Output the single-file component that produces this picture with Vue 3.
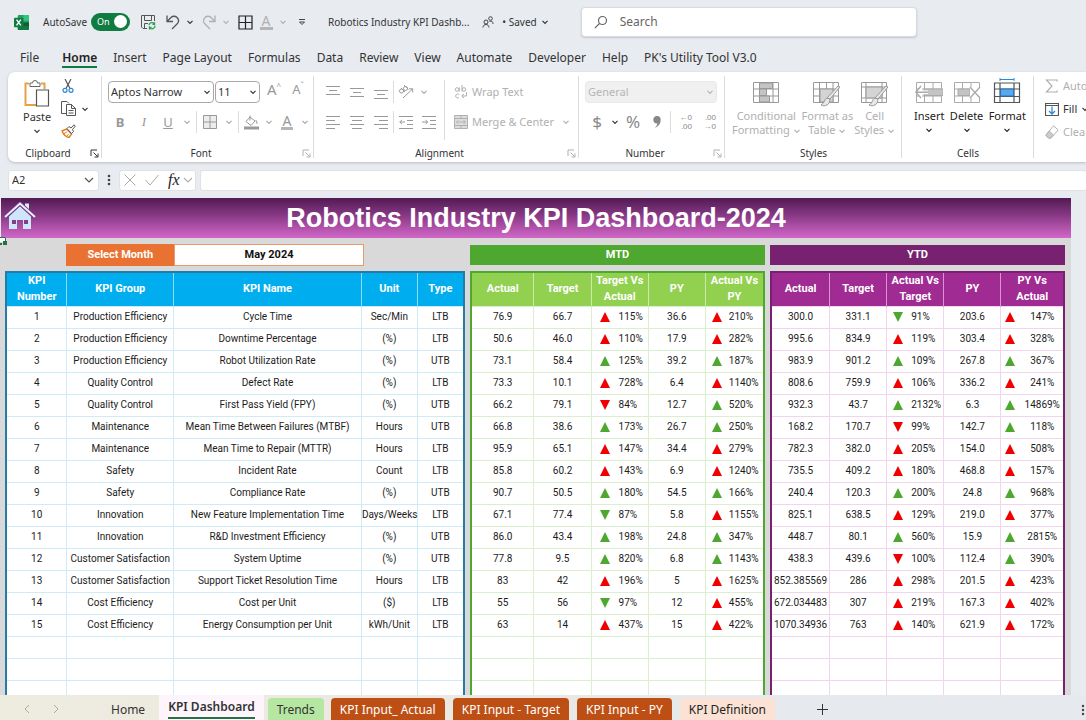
<script setup>
import { ref, h } from 'vue'

const menu = ['File', 'Home', 'Insert', 'Page Layout', 'Formulas', 'Data', 'Review', 'View', 'Automate', 'Developer', 'Help', "PK's Utility Tool V3.0"]
const fontName = ref('Aptos Narrow')
const fontSize = ref('11')
const numberFormat = ref('General')
const cellName = ref('A2')
const formula = ref('')
const search = ref('')
const autosave = ref(true)

const Chev = () => h('svg', { class: 'chev', viewBox: '0 0 8 8', width: 8, height: 8, 'aria-hidden': 'true' },
  [h('path', { d: 'M1.5 2.8 4 5.3 6.5 2.8', fill: 'none', stroke: 'currentColor', 'stroke-width': 1.2 })])
const Launch = () => h('svg', { class: 'launch', viewBox: '0 0 9 9', width: 9, height: 9, 'aria-hidden': 'true' },
  [h('path', { d: 'M1 7V1h6M3.5 3.5 7.5 7.5M8 4.5V8H4.5', fill: 'none', stroke: 'currentColor' })])
const LineIcon = (p) => h('svg', { viewBox: '0 0 14 14', width: 14, height: 14, 'aria-hidden': 'true' },
  [h('path', { d: p.d, fill: 'none', stroke: 'currentColor', 'stroke-width': 1 })])
LineIcon.props = ['d']
const Tri = (p) => h('svg', { class: 'tri', viewBox: '0 0 10 10', width: 10, height: 10, 'aria-hidden': 'true' },
  [h('path', { d: p.k[1] === 'u' ? 'M5 0 10 10H0z' : 'M0 0H10L5 10z', fill: p.k[0] === 'r' ? '#f20000' : '#4ea72e' })])
Tri.props = ['k']

const vAlign = [
  { label: 'Top Align', d: 'M0 1.5H14M3 5.500H11M0 9.500H14' },
  { label: 'Middle Align', d: 'M0 3.500H14M3 7.500H11M0 11.500H14' },
  { label: 'Bottom Align', d: 'M0 5.500H14M3 9.500H11M0 13.500H14' }
]
const hAlign = [
  { label: 'Align Left', d: 'M0 1.500H14M0 5.500H9M0 9.500H14M0 13.500H9' },
  { label: 'Center', d: 'M0 1.500H14M2 5.500H12M0 9.500H14M2 13.500H12' },
  { label: 'Align Right', d: 'M0 1.500H14M5 5.500H14M0 9.500H14M5 13.500H14' }
]

const kpis = [
  ['Production Efficiency', 'Cycle Time', 'Sec/Min', 'LTB'],
  ['Production Efficiency', 'Downtime Percentage', '(%)', 'LTB'],
  ['Production Efficiency', 'Robot Utilization Rate', '(%)', 'UTB'],
  ['Quality Control', 'Defect Rate', '(%)', 'LTB'],
  ['Quality Control', 'First Pass Yield (FPY)', '(%)', 'UTB'],
  ['Maintenance', 'Mean Time Between Failures (MTBF)', 'Hours', 'UTB'],
  ['Maintenance', 'Mean Time to Repair (MTTR)', 'Hours', 'LTB'],
  ['Safety', 'Incident Rate', 'Count', 'LTB'],
  ['Safety', 'Compliance Rate', '(%)', 'UTB'],
  ['Innovation', 'New Feature Implementation Time', 'Days/Weeks', 'LTB'],
  ['Innovation', 'R&D Investment Efficiency', '(%)', 'UTB'],
  ['Customer Satisfaction', 'System Uptime', '(%)', 'UTB'],
  ['Customer Satisfaction', 'Support Ticket Resolution Time', 'Hours', 'LTB'],
  ['Cost Efficiency', 'Cost per Unit', '($)', 'LTB'],
  ['Cost Efficiency', 'Energy Consumption per Unit', 'kWh/Unit', 'LTB']
]

// Each row: actual, target, trend + percentage, previous year, trend + percentage.
const periods = [
  {
    name: 'MTD',
    cls: 'mtd',
    heads: ['Actual', 'Target', 'Target Vs Actual', 'PY', 'Actual Vs PY'],
    rows: [
      ['76.9', '66.7', 'ru', '115%', '36.6', 'ru', '210%'],
      ['50.6', '46.0', 'ru', '110%', '17.9', 'ru', '282%'],
      ['73.1', '58.4', 'gu', '125%', '39.2', 'gu', '187%'],
      ['73.3', '10.1', 'ru', '728%', '6.4', 'ru', '1140%'],
      ['66.2', '79.1', 'rd', '84%', '12.7', 'gu', '520%'],
      ['66.8', '38.6', 'gu', '173%', '26.7', 'gu', '250%'],
      ['95.9', '65.1', 'ru', '147%', '34.4', 'ru', '279%'],
      ['85.8', '60.2', 'ru', '143%', '6.9', 'ru', '1240%'],
      ['90.7', '50.5', 'gu', '180%', '54.5', 'gu', '166%'],
      ['67.1', '77.4', 'gd', '87%', '5.8', 'ru', '1155%'],
      ['86.0', '43.4', 'gu', '198%', '24.8', 'gu', '347%'],
      ['77.8', '9.5', 'gu', '820%', '6.8', 'gu', '1143%'],
      ['83', '42', 'ru', '196%', '5', 'ru', '1625%'],
      ['55', '56', 'gd', '97%', '12', 'ru', '455%'],
      ['63', '14', 'ru', '437%', '15', 'ru', '422%']
    ]
  },
  {
    name: 'YTD',
    cls: 'ytd',
    heads: ['Actual', 'Target', 'Actual Vs Target', 'PY', 'PY Vs Actual'],
    rows: [
      ['300.0', '331.1', 'gd', '91%', '203.6', 'ru', '147%'],
      ['995.6', '834.9', 'ru', '119%', '303.4', 'ru', '328%'],
      ['983.9', '901.2', 'gu', '109%', '267.8', 'gu', '367%'],
      ['808.6', '759.9', 'ru', '106%', '336.2', 'ru', '241%'],
      ['932.3', '43.7', 'gu', '2132%', '6.3', 'gu', '14869%'],
      ['168.2', '170.7', 'rd', '99%', '142.7', 'gu', '118%'],
      ['782.3', '382.0', 'ru', '205%', '154.0', 'ru', '508%'],
      ['735.5', '409.2', 'ru', '180%', '468.8', 'ru', '157%'],
      ['240.4', '120.3', 'gu', '200%', '24.8', 'gu', '968%'],
      ['825.1', '638.5', 'ru', '129%', '219.0', 'ru', '377%'],
      ['448.7', '80.1', 'gu', '560%', '15.9', 'gu', '2815%'],
      ['438.3', '439.6', 'rd', '100%', '112.4', 'gu', '390%'],
      ['852.385569', '286', 'ru', '298%', '201.5', 'ru', '423%'],
      ['672.034483', '307', 'ru', '219%', '167.3', 'ru', '402%'],
      ['1070.34936', '763', 'ru', '140%', '621.9', 'ru', '172%']
    ]
  }
]
</script>

<template>
  <div class="app">
    <header class="title-bar">
      <svg class="logo" viewBox="0 0 16 16" width="15" height="15" aria-label="Excel">
        <rect x="4" y="0" width="12" height="16" rx="1" fill="#21a366" />
        <path d="M4 8h12v7a1 1 0 0 1-1 1H5a1 1 0 0 1-1-1z" fill="#107c41" />
        <path d="M10 0h5a1 1 0 0 1 1 1v5h-6z" fill="#33c481" />
        <path d="M10 8h6v4h-6z" fill="#185c37" />
        <rect y="3" width="10" height="10" rx="1" fill="#107c41" />
        <path d="M2.700 5 7.300 11M7.300 5 2.700 11" stroke="#fff" stroke-width="1.500" />
      </svg>
      <label class="autosave">AutoSave
        <span class="toggle"><input v-model="autosave" type="checkbox" role="switch"><span>On</span></span>
      </label>
      <button class="ic save" aria-label="Save">
        <svg viewBox="0 0 16 16" width="16" height="16" fill="none" stroke="#555">
          <path d="M7 14.500H3L1.500 13V1.500h13V7M4.500 1.500v5h7v-5M4.500 14V9.500H8" />
          <path d="M9 11a3 3 0 0 1 5.500-1V8.200M14.500 10.300h-2M15 12a3 3 0 0 1-5.500 1.500v2M9.500 13.300h2" stroke="#2c9c4d" stroke-width="1.300" />
        </svg>
      </button>
      <button class="ic" aria-label="Undo">
        <svg viewBox="0 0 14 16" width="14" height="16" fill="none" stroke="#555" stroke-width="1.300"><path d="M1 1.500v6h6M1.500 7 5 3.500a4.200 4.200 0 0 1 6 0c2 2 2 4.500 0 6.500L6 15" /></svg>
      </button>
      <button class="ic drop" aria-label="Undo options"><Chev /></button>
      <button class="ic off" aria-label="Redo">
        <svg viewBox="0 0 14 16" width="14" height="16" fill="none" stroke="currentColor" stroke-width="1.300"><path d="M13 1.500v6H7M12.500 7 9 3.500a4.200 4.200 0 0 0-6 0c-2 2-2 4.500 0 6.500l5 5" /></svg>
      </button>
      <button class="ic drop off" aria-label="Redo options"><Chev /></button>
      <button class="ic" aria-label="Borders">
        <svg viewBox="0 0 15 15" width="15" height="15" fill="none" stroke="#222" stroke-width="1.200"><path d="M1 1h13v13H1zM7.500 1v13M1 7.500h13" /></svg>
      </button>
      <button class="ic off font-color" aria-label="Font Color"><span>A</span></button>
      <button class="ic drop off" aria-label="Font color options"><Chev /></button>
      <button class="ic customize" aria-label="Customize Quick Access Toolbar">
        <svg viewBox="0 0 8 8" width="8" height="8" fill="none" stroke="#444"><path d="M1 1.500h6M1.500 4h5L4 6.500z" /></svg>
      </button>
      <span class="doc">Robotics Industry KPI Dashb...</span>
      <svg class="people" viewBox="0 0 12 12" width="12" height="12" fill="none" stroke="#444">
        <circle cx="4" cy="6" r="2" /><path d="M1 11.500c0-4 6-4 6 0" /><circle cx="8.500" cy="2.500" r="1.800" /><path d="M7.500 5.500c2-1 3.500 0 3.500 2.500" />
      </svg>
      <button class="saved">• Saved <Chev /></button>
      <label class="search">
        <svg viewBox="0 0 14 14" width="14" height="14" fill="none" stroke="#666" stroke-width="1.200"><circle cx="8.500" cy="5.500" r="4" /><path d="M5.500 8.500.8 13.200" /></svg>
        <input v-model="search" type="text" placeholder="Search" aria-label="Search">
      </label>
    </header>

    <nav class="menu" aria-label="Ribbon tabs">
      <a v-for="m in menu" :key="m" href="#" :class="{ active: m === 'Home' }">{{ m }}</a>
    </nav>

    <div class="ribbon">
      <section class="group clipboard">
        <div class="body">
          <button class="big">
            <svg viewBox="0 0 26 28" width="26" height="28" fill="none">
              <path d="M5 4.500H1.500V26h11" stroke="#e8a046" stroke-width="2" /><path d="M17 4.500h3.500V10" stroke="#e8a046" stroke-width="2" />
              <path d="M6 7.500V4h2.500a2.500 2.500 0 0 1 5 0H16v3.500z" fill="#fff" stroke="#666" />
              <path d="M12.500 11h12v16h-12z" fill="#fff" stroke="#555" stroke-width="1.200" />
            </svg>
            Paste<Chev />
          </button>
          <div class="small">
            <button aria-label="Cut">
              <svg viewBox="0 0 12 14" width="12" height="14" fill="none"><path d="M3 0l5 9.500M9 0 4 9.500" stroke="#555" stroke-width="1.200" /><circle cx="3" cy="11.300" r="2" stroke="#2b88d8" stroke-width="1.200" /><circle cx="9" cy="11.300" r="2" stroke="#2b88d8" stroke-width="1.200" /></svg>
            </button>
            <span class="pair">
              <button aria-label="Copy">
                <svg viewBox="0 0 15 15" width="15" height="15" fill="none" stroke="#555"><path d="M5 12.500H.5V.5H6l2 2" /><path d="M5.500 3.500h5l4 4v7h-9zM10.500 3.500v4h4M7.500 9.500h5M7.500 12h5" /></svg>
              </button>
              <button aria-label="Copy options"><Chev /></button>
            </span>
            <button aria-label="Format Painter">
              <svg viewBox="0 0 15 14" width="15" height="14" fill="none"><path d="M1 7 5.500 5l5 5L8 13.500C5 13 2.500 10.500 1 7z" fill="#fff" stroke="#e07b1c" stroke-width="1.400" /><path d="M3 9.500 6 8M6 12l1.500-2" stroke="#e07b1c" /><path d="M6 4.500 8 2.500 10 4 13 .8l1.300 1.300L11.500 5.500 12.500 7.500 10.500 9.500z" fill="#fff" stroke="#555" /></svg>
            </button>
          </div>
        </div>
        <footer>Clipboard<Launch /></footer>
      </section>

      <section class="group font off-launch">
        <div class="body rows">
          <div class="row">
            <span class="select name"><select v-model="fontName" aria-label="Font"><option>Aptos Narrow</option></select><Chev /></span>
            <span class="select size"><select v-model="fontSize" aria-label="Font size"><option>11</option></select><Chev /></span>
            <button class="tool grow" aria-label="Increase Font Size">A<sup>^</sup></button>
            <button class="tool shrink" aria-label="Decrease Font Size">A<sup>ˇ</sup></button>
          </div>
          <div class="row">
            <button class="tool" aria-label="Bold"><b>B</b></button>
            <button class="tool" aria-label="Italic"><i>I</i></button>
            <button class="tool" aria-label="Underline"><u>U</u></button>
            <button class="mini" aria-label="Underline options"><Chev /></button>
            <span class="sep"></span>
            <button class="tool" aria-label="Borders">
              <svg viewBox="0 0 14 14" width="14" height="14" fill="#ededed" stroke="currentColor"><path d="M.5.5h13v13H.5zM7 .5v13M.5 7h13" /></svg>
            </button>
            <button class="mini" aria-label="Border options"><Chev /></button>
            <span class="sep"></span>
            <button class="tool fill" aria-label="Fill Color">
              <svg viewBox="0 0 15 15" width="15" height="15" fill="none" stroke="currentColor"><path d="M6 2l5 4-4 4.500-5-4zM6 .5v5M11.500 5c1.500 1 1.500 3 1.500 4" /><path d="M0 13h15" stroke-width="3" /></svg>
            </button>
            <button class="mini" aria-label="Fill options"><Chev /></button>
            <button class="tool fill font-color" aria-label="Font Color"><span>A</span></button>
            <button class="mini" aria-label="Font color options"><Chev /></button>
          </div>
        </div>
        <footer>Font<Launch /></footer>
      </section>

      <section class="group align off-launch">
        <div class="body">
          <div class="rows first">
            <div class="row">
              <button v-for="a in vAlign" :key="a.label" class="tool" :aria-label="a.label"><LineIcon :d="a.d" /></button>
              <span class="sep"></span>
              <button class="tool" aria-label="Orientation">
                <svg viewBox="0 0 16 14" width="16" height="14" fill="none" stroke="currentColor"><circle cx="3.500" cy="6" r="2" /><path d="M3 3l4 4M6 0l4.500 4.500" /><circle cx="7.500" cy="3.500" r="2" /><path d="M5 13 14.500 4M11 3.800h3.700v3.500" /></svg>
              </button>
              <button class="mini" aria-label="Orientation options"><Chev /></button>
            </div>
            <div class="row">
              <button v-for="a in hAlign" :key="a.label" class="tool" :aria-label="a.label"><LineIcon :d="a.d" /></button>
              <span class="sep"></span>
              <button class="tool" aria-label="Decrease Indent"><LineIcon d="M0 1.500H14M8 5.500H14M8 9.500H14M0 13.500H14M6 7H.8M3 4.800.8 7 3 9.200" /></button>
              <button class="tool" aria-label="Increase Indent"><LineIcon d="M0 1.500H14M8 5.500H14M8 9.500H14M0 13.500H14M0 7H5.500M3.500 4.800 5.700 7 3.500 9.200" /></button>
            </div>
          </div>
          <span class="tall-sep"></span>
          <div class="rows second">
            <button class="row text-tool">
              <svg viewBox="0 0 14 14" width="14" height="14" fill="none" stroke="currentColor"><circle cx="3" cy="4.500" r="1.800" /><path d="M5.300 2.500v4M8 0v6.500" /><circle cx="10" cy="4.500" r="1.800" /><path d="M5 9.500a2 2 0 1 0 0 3M12.500 7v4H8M10 9l-2.300 2L10 13" /></svg>
              Wrap Text
            </button>
            <button class="row text-tool">
              <svg viewBox="0 0 14 14" width="14" height="14" fill="#ddd" stroke="currentColor"><path d="M.5.5h13v13H.5zM.5 3.500h13M.5 10.500h13M7 .5v3M7 10.500v3M2.500 7h9M4.500 5 2.500 7l2 2M9.500 5l2 2-2 2" /></svg>
              Merge &amp; Center <Chev />
            </button>
          </div>
        </div>
        <footer>Alignment<Launch /></footer>
      </section>

      <section class="group number off-launch">
        <div class="body rows">
          <div class="row">
            <span class="select fmt"><select v-model="numberFormat" disabled aria-label="Number format"><option>General</option></select><Chev /></span>
          </div>
          <div class="row nums">
            <button aria-label="Accounting" class="glyph">$</button>
            <button class="dark" aria-label="Accounting options"><Chev /></button>
            <button aria-label="Percent" class="glyph">%</button>
            <button aria-label="Comma" class="glyph">
              <svg viewBox="0 0 8 12" width="8" height="12"><path d="M4 0a3.500 3.500 0 0 1 3.700 3.800C7.700 8 5 11 1.500 12c1.800-1.500 2.800-3 2.900-4.500C2 7.800.3 6 .3 3.800A3.600 3.600 0 0 1 4 0z" fill="currentColor" /></svg>
            </button>
            <span class="sep"></span>
            <button class="dec" aria-label="Increase Decimal"><span>←0</span><span>.00</span></button>
            <button class="dec" aria-label="Decrease Decimal"><span>.00</span><span>→0</span></button>
          </div>
        </div>
        <footer>Number<Launch /></footer>
      </section>

      <section class="group styles">
        <div class="body bigs off">
          <button class="big">
            <svg viewBox="0 0 26 22" width="26" height="22" fill="none" stroke="#999"><path d="M.5.500h25v20H.5zM6.500.5v20M13.500.5v20M20 .5v20M.5 7h25M.5 14h25" /><path d="M6.500 1h13v5.500h-13zM6.500 7h7v6.500h-7zM6.500 14h10v6h-10z" fill="#c4c4c4" /></svg>
            <span>Conditional<br>Formatting <Chev /></span>
          </button>
          <button class="big">
            <svg viewBox="0 0 28 25" width="28" height="25" fill="none" stroke="#999"><path d="M.5.500h25v20H.5zM6.500.5v20M13.500.5v20M20 .5v20M.5 7h25M.5 14h25" /><path d="M7 7h13v13H7z" fill="#d4d4d4" /><path d="M27 5 17 17l-3-1L25 4zM14 16c-3 1-2 5-6 7 4 2 9 0 9-6z" fill="#e8e8e8" /></svg>
            <span>Format as<br>Table <Chev /></span>
          </button>
          <button class="big">
            <svg viewBox="0 0 28 25" width="28" height="25" fill="none" stroke="#999"><path d="M.5.500h25v20H.5zM5 .5v20M21 .5v20M.5 5h25M.5 16h25" /><path d="M5 5h16v11H5z" fill="#d4d4d4" /><path d="M27 5 17 17l-3-1L25 4zM14 16c-3 1-2 5-6 7 4 2 9 0 9-6z" fill="#e8e8e8" /></svg>
            <span>Cell<br>Styles <Chev /></span>
          </button>
        </div>
        <footer>Styles</footer>
      </section>

      <section class="group cells">
        <div class="body bigs">
          <button class="big">
            <svg viewBox="0 0 28 28" width="28" height="28" fill="none" stroke="#aaa"><path d="M1.500 4.500h25v20h-25zM9.500 4.500v20M18 4.500v20M1.500 11h25M1.500 18h25" /><path d="M9 11h19v6.500H9z" fill="#c4c4c4" /><path d="M7 8 .8 14.200 7 20v-4h6v-3.500H7z" fill="#fff" stroke="none" /><path d="M6 8 .8 14.200 6 20M1 14.200h12" stroke-width="1.400" /></svg>
            <span>Insert</span><Chev />
          </button>
          <button class="big">
            <svg viewBox="0 0 28 28" width="28" height="28" fill="none" stroke="#aaa"><path d="M1.500 4.500h25v20h-25zM9.500 4.500v20M18 4.500v20M1.500 11h25M1.500 18h25" /><path d="M5 11h12v6.500H5z" fill="#c4c4c4" /><path d="M17 9h10v11H17z" fill="#fff" stroke="none" /><path d="M17 9l10 11M27 9 17 20" stroke-width="1.300" /></svg>
            <span>Delete</span><Chev />
          </button>
          <button class="big">
            <svg viewBox="0 0 28 28" width="28" height="28" fill="none" stroke="#555"><path d="M1.500 5h25v19.500h-25zM7 5v19.500M21 5v19.500M1.500 11h25M1.500 18.500h25" stroke-width="1.200" /><path d="M7.500 11h13v7h-13z" fill="#5aa9e8" stroke="#1f74c4" /><path d="M7 1.500h14M7 0v3M21 0v3" stroke="#2b88d8" /></svg>
            <span>Format</span><Chev />
          </button>
        </div>
        <footer>Cells</footer>
      </section>

      <section class="group editing">
        <button class="off">
          <svg viewBox="0 0 14 14" width="14" height="14" fill="none" stroke="currentColor" stroke-width="1.200"><path d="M12 2.500V1H1.500L7 7l-5.500 6H12v-1.500" /></svg>AutoSum
        </button>
        <button>
          <svg viewBox="0 0 14 14" width="14" height="14" fill="none" stroke="#555"><path d="M.5 1.500h13v12H.5zM.5 3.500h13" stroke-width="1.200" /><path d="M7 4.500V12M4 9l3 3 3-3" stroke="#2b88d8" stroke-width="1.300" /></svg>Fill <Chev />
        </button>
        <button class="off">
          <svg viewBox="0 0 14 14" width="14" height="14" fill="none" stroke="currentColor"><path d="M8.500.8 13.200 5 6 13H3.500L.8 10.300z" /><path d="M4.200 6 .8 10.300 3.500 13H6l2.500-3z" fill="#ccc" /></svg>Clear <Chev />
        </button>
      </section>
    </div>

    <div class="formula-bar">
      <label class="name-box"><input v-model="cellName" type="text" aria-label="Name Box">
        <svg viewBox="0 0 10 8" width="10" height="8" fill="none" stroke="#555" stroke-width="1.200"><path d="M1 2l4 4 4-4" /></svg>
      </label>
      <svg class="dots" viewBox="0 0 4 12" width="4" height="12" fill="#444"><circle cx="2" cy="2" r="1.300" /><circle cx="2" cy="6" r="1.300" /><circle cx="2" cy="10" r="1.300" /></svg>
      <div class="fx-box">
        <button aria-label="Cancel"><svg viewBox="0 0 12 12" width="12" height="12" fill="none" stroke="#aaa"><path d="M.5.5l11 11M11.500.5l-11 11" /></svg></button>
        <button aria-label="Enter"><svg viewBox="0 0 14 12" width="14" height="12" fill="none" stroke="#aaa"><path d="M.5 6 5 11 13.500 1" /></svg></button>
        <button class="fx" aria-label="Insert Function">fx</button>
        <button class="off" aria-label="Function options"><svg viewBox="0 0 10 8" width="10" height="8" fill="none" stroke="currentColor" stroke-width="1.200"><path d="M1 2l4 4 4-4" /></svg></button>
      </div>
      <input v-model="formula" class="formula" type="text" aria-label="Formula Bar">
    </div>

    <main class="sheet">
      <div class="dashboard">
        <div class="banner">
          <a href="#" aria-label="Home">
            <svg viewBox="0 0 32 28" width="32" height="28"><path d="M21 1.500h4v8l-4-4z" fill="#d6ecfb" /><path d="M16 4 27 14v13H19v-9h-6v9H5V14z" fill="#cfe6fa" /><path d="M1 15.500 16 1.500l15 14" fill="none" stroke="#7b3b84" stroke-width="4" /><path d="M1 15 16 1.500 31 15" fill="none" stroke="#e6f5fd" stroke-width="2" /><path d="M8 18h4v4H8zM20 18h4v4h-4z" fill="#7f3e86" /></svg>
          </a>
          <h1>Robotics Industry KPI Dashboard-2024</h1>
        </div>
        <div class="blocks">
          <section class="block kpi">
            <div class="strip">
              <svg class="cell-mark" viewBox="0 0 8 8" width="8" height="8"><path d="M0 0h6v5H0z" fill="#fff" /><path d="M0 .5h5.500V4" fill="none" stroke="#217346" /><path d="M3 4h4v4H3zM0 6h2v2H0z" fill="#217346" /></svg>
              <span class="sel-label">Select Month</span>
              <span class="sel-value">May 2024</span>
            </div>
            <table>
              <colgroup><col class="c-no"><col class="c-group"><col class="c-name"><col class="c-unit"><col></colgroup>
              <thead><tr><th>KPI<br>Number</th><th>KPI Group</th><th>KPI Name</th><th>Unit</th><th>Type</th></tr></thead>
              <tbody>
                <tr v-for="(r, i) in kpis" :key="i"><td>{{ i + 1 }}</td><td v-for="(c, j) in r" :key="j">{{ c }}</td></tr>
                <tr v-for="n in 4" :key="'e' + n"><td v-for="c in 5" :key="c"></td></tr>
              </tbody>
            </table>
          </section>
          <section v-for="p in periods" :key="p.name" class="block" :class="p.cls">
            <div class="strip bar">{{ p.name }}</div>
            <table>
              <colgroup><col class="c-act"><col class="c-num"><col class="c-num"><col class="c-num"><col></colgroup>
              <thead><tr><th v-for="t in p.heads" :key="t">{{ t }}</th></tr></thead>
              <tbody>
                <tr v-for="(r, i) in p.rows" :key="i">
                  <td>{{ r[0] }}</td>
                  <td>{{ r[1] }}</td>
                  <td><div class="trend mid"><Tri :k="r[2]" /><span>{{ r[3] }}</span></div></td>
                  <td>{{ r[4] }}</td>
                  <td><div class="trend last"><Tri :k="r[5]" /><span>{{ r[6] }}</span></div></td>
                </tr>
                <tr v-for="n in 4" :key="'e' + n"><td v-for="c in 5" :key="c"></td></tr>
              </tbody>
            </table>
          </section>
        </div>
      </div>
    </main>

    <footer class="tabs">
      <button class="nav" aria-label="Previous sheet"><svg viewBox="0 0 6 10" width="6" height="10" fill="none" stroke="#aaa"><path d="M5 1 1 5l4 4" /></svg></button>
      <button class="nav" aria-label="Next sheet"><svg viewBox="0 0 6 10" width="6" height="10" fill="none" stroke="#aaa"><path d="M1 1l4 4-4 4" /></svg></button>
      <button class="tab home">Home</button>
      <button class="tab current"><span>KPI Dashboard</span></button>
      <button class="tab green">Trends</button>
      <button class="tab orange">KPI Input_ Actual</button>
      <button class="tab orange">KPI Input - Target</button>
      <button class="tab orange">KPI Input - PY</button>
      <button class="tab peach">KPI Definition</button>
      <button class="add" aria-label="New sheet"><svg viewBox="0 0 11 11" width="11" height="11" stroke="#333"><path d="M5.500 0v11M0 5.500h11" /></svg></button>
      <svg class="more" viewBox="0 0 4 12" width="4" height="12" fill="#444"><circle cx="2" cy="2" r="1.200" /><circle cx="2" cy="6" r="1.200" /><circle cx="2" cy="10" r="1.200" /></svg>
    </footer>
  </div>
</template>

<style>
body { margin: 0; background: #e9ecf1; }
svg { display: block; flex: none; }
svg.chev { display: inline-block; }
svg.launch { position: absolute; right: 3px; top: 3px; }
</style>

<style scoped>
.app {
  display: flex;
  flex-direction: column;
  height: 100vh;
  overflow: hidden;
  background: #e8ebf0;
  color: #333;
  font: 11px/14px "Noto Sans", "Open Sans", sans-serif;
}
button, input, select { font: inherit; color: inherit; background: none; border: 0; padding: 0; margin: 0; outline: 0; }
button { display: flex; align-items: center; justify-content: center; }
a { color: inherit; text-decoration: none; }
.off { color: #b0b0b0; }

.title-bar { display: flex; align-items: center; height: 44px; flex: none; padding-left: 14px; white-space: nowrap; font-size: 10px; }
.autosave { display: flex; align-items: center; gap: 4px; margin-left: 14px; }
.toggle { position: relative; display: block; width: 39px; height: 18px; }
.toggle input { appearance: none; display: block; width: 39px; height: 18px; border-radius: 9px; background: #107c41; }
.toggle input::after { content: ""; display: block; width: 13px; height: 13px; margin: 2px 0 0 23px; border-radius: 50%; background: #fff; }
.toggle span { position: absolute; left: 6px; top: 2px; color: #fff; font-size: 9px; }
.ic { width: 20px; height: 24px; }
.save { margin-left: 4px; width: 28px; }
.drop { width: 12px; margin-right: 2px; }
.title-bar .ic + .ic { margin-left: 1px; }
.font-color span { line-height: 13px; font-size: 14px; border-bottom: 3px solid #b5b5b5; padding: 0 2px; }
.doc { margin-left: 16px; }
.people { margin-left: 13px; }
.saved { gap: 4px; margin-left: 8px; }
.search { display: flex; align-items: center; gap: 12px; flex: 0 1 322px; height: 28px; margin-left: 32px; padding-left: 12px; background: #fff; border: 1px solid #d8dade; border-radius: 4px; box-shadow: 0 1px 2px #c4c7cc; font-size: 12px; }
.search input { flex: 1; min-width: 0; }
.search input::placeholder { color: #666; }

.menu { display: flex; flex: none; height: 28px; padding: 0 20px; gap: 16px; font-size: 12px; white-space: nowrap; }
.menu a { height: 22px; line-height: 28px; border-bottom: 2px solid transparent; }
.menu a:first-child { margin-right: 7px; }
.menu .active { font-weight: 600; color: #222; border-color: #107c41; }

.ribbon { display: flex; flex: none; height: 90px; margin-left: 8px; overflow: hidden; background: #fff; border-radius: 7px 0 0 7px; box-shadow: 0 1px 3px #b9bcc2; white-space: nowrap; }
.group { position: relative; display: flex; flex-direction: column; flex: none; box-sizing: border-box; }
.group::after { content: ""; position: absolute; right: 0; top: 4px; bottom: 4px; width: 1px; background: #dcdcdc; }
.body { display: flex; flex: 1; }
.group footer { position: relative; height: 16px; font-size: 10px; line-height: 14px; text-align: center; }
.off-launch footer { padding-right: 14px; }
.off-launch .launch { color: #b0b0b0; }
.big { flex-direction: column; justify-content: flex-start; }
.clipboard { width: 94px; }
.clipboard footer { padding-right: 14px; }
.clipboard .body { padding: 7px 0 0 15px; gap: 10px; }
.clipboard .big { line-height: 20px; align-self: flex-start; }
.small { display: flex; flex-direction: column; align-items: flex-start; gap: 8px; }
.small > button:first-child { margin-left: 1px; }
.pair { display: flex; gap: 5px; }
.rows { display: flex; flex-direction: column; gap: 6px; padding-top: 8px; box-sizing: border-box; }
.row { display: flex; align-items: center; height: 24px; justify-content: flex-start; }
.font { width: 212px; }
.font .body, .number .body { padding-left: 6px; }
.font .row { color: #999; }
.select { position: relative; display: block; box-sizing: border-box; height: 22px; border: 1px solid #a8a8a8; border-radius: 4px; color: #333; }
.select select { appearance: none; width: 100%; height: 20px; padding-left: 2px; }
.select .chev { position: absolute; right: 2px; top: 6px; pointer-events: none; }
.name { width: 106px; }
.size { width: 45px; margin-left: 1px; }
.select.fmt { width: 132px; background: #f0f0f0; border-color: #e8e8e8; color: #b5b5b5; }
.fmt select { opacity: 1; }
.tool { width: 24px; height: 20px; }
.font .tool { font-size: 13px; }
.grow, .shrink { align-items: flex-start; margin-left: 2px; }
.font .grow { font-size: 15px; }
.font .shrink { margin-left: 0; }
sup { font-size: 8px; line-height: 8px; }
.font i { font-family: "Liberation Serif", serif; }
.mini { width: 14px; height: 20px; color: #aaa; }
.sep { width: 1px; height: 22px; margin: 0 2px; background: #dcdcdc; }
.font .row .sep { margin: 0 1px 0 2px; }
.font .fill { width: 22px; }
.align { width: 265px; }
.align .body { color: #999; }
.first { padding-left: 7px; width: 130px; }
.first .sep { margin: 0; }
.first .sep ~ .tool { width: 23px; }
.tall-sep { width: 1px; margin: 8px 0 6px; background: #dcdcdc; }
.second { padding-left: 9px; }
.text-tool { gap: 4px; font-size: 11px; color: #b0b0b0; }
.text-tool .chev { margin-left: 4px; }
.number { width: 146px; }
.nums { color: #888; }
.glyph { width: 24px; font-size: 17px; }
.dark { width: 12px; color: #333; }
.dec { width: 24px; flex-direction: column; font: 8px/9px "Liberation Sans", Arial, sans-serif; align-items: flex-end; padding-right: 3px; box-sizing: border-box; }
.nums .sep { margin: 0 0 0 1px; }
.styles { width: 177px; }
.styles .body { padding: 10px 7px 0; justify-content: space-between; }
.styles .big { height: 55px; line-height: 14px; justify-content: space-between; }
.styles .chev { vertical-align: middle; }
.cells { width: 132px; }
.cells .body { padding: 6px 8px 0 12px; justify-content: space-between; }
.cells .big { line-height: 20px; color: #222; }
.editing { gap: 9px; padding: 7px 0 0 11px; width: 80px; }
.editing::after { display: none; }
.editing button { justify-content: flex-start; gap: 4px; height: 14px; }

.formula-bar { display: flex; align-items: center; flex: none; height: 36px; padding-left: 8px; }
.name-box, .fx-box, .formula { box-sizing: border-box; height: 21px; background: #fff; border: 1px solid #dfe1e5; border-radius: 3px; }
.name-box { display: flex; align-items: center; width: 91px; padding: 0 4px 0 3px; }
.name-box input { flex: 1; min-width: 0; }
.dots { margin: 0 8px; }
.fx-box { display: flex; align-items: center; gap: 9px; width: 77px; padding-left: 4px; }
.fx { font: italic 16px/18px "Liberation Serif", serif; color: #222; }
.fx-box .off { margin-left: -6px; }
.formula { flex: 1; margin-left: 4px; border-right: 0; }

.sheet { flex: 1; min-height: 0; overflow: hidden; }
.dashboard { margin-right: 15px; background: #d9d9d9; }
.banner { position: relative; height: 40px; background: linear-gradient(#511a52, #8a3a87 45%, #d267c9); border-left: 1px solid #eee; }
.banner a { position: absolute; left: 3px; top: 4px; }
h1 { margin: 0; text-align: center; color: #fff; font: bold 27px/40px "Liberation Sans", Arial, sans-serif; }
.blocks { display: grid; grid-template-columns: 460fr 295fr 295fr; gap: 5px; padding: 0 6px 0 5px; font: 10px/14px Roboto, "Noto Sans", sans-serif; color: #1c1c1c; }
.strip { height: 22px; margin: 6px 0 5px; box-sizing: border-box; font-size: 11px; font-weight: bold; line-height: 22px; text-align: center; }
.kpi .strip { position: relative; display: grid; grid-template-columns: 61fr 108fr 189fr 101fr; }
.sel-label { grid-column: 2; background: #e97132; color: #fff; }
.sel-value { background: #fff; color: #111; line-height: 20px; border: 1px solid #ea996c; }
.strip.bar { color: #fff; border: solid #d9d9d9; border-width: 1px 0; line-height: 20px; }
.cell-mark { position: absolute; left: -5px; top: -7px; }
table { width: 100%; border-collapse: collapse; table-layout: fixed; background: #fff; border: 2px solid var(--edge); border-bottom: 0; }
.kpi { --edge: #247ca6; --head: #00aeef; --line: #d0ebf8; --hline: #8bdcfa; }
.mtd { --edge: #4ea72e; --head: #92d050; --line: #daf0cd; --hline: #c9eaa8; }
.ytd { --edge: #782170; --head: #a02b93; --line: #f1d5ef; --hline: #d894d0; }
.mtd .bar { background: #4ea72e; }
.ytd .bar { background: #782170; }
th { height: 34px; padding: 0 4px; box-sizing: border-box; background: var(--head); color: #fff; font-size: 11px; line-height: 16px; border-right: 1px solid var(--hline); }
td { height: 22px; padding: 0; box-sizing: border-box; text-align: center; white-space: nowrap; border: 1px solid var(--line); }
th:last-child, td:last-child { border-right: 2px solid var(--edge); }
td:first-child { border-left: 2px solid var(--edge); }
.c-no { width: 13.3%; }
.c-group { width: 23.300%; }
.c-name { width: 41%; }
.c-unit { width: 12.200%; }
.mtd .c-act { width: 21.500%; }
.ytd .c-act { width: 20%; }
.c-num { width: 19.500%; }
.trend { display: flex; align-items: center; }
.mtd .mid { padding-left: 8px; gap: 9px; }
.ytd .mid { padding-left: 6px; gap: 8px; }
.mtd .last { padding-left: 6px; gap: 7px; }
.ytd .last { padding-left: 4px; gap: 6px; }
.ytd .last span { flex: 1; }

.tabs { display: flex; align-items: flex-end; flex: none; height: 25px; background: linear-gradient(90deg, #eeebdf, #eae8e3 50%, #e6e9ed 70%); font-size: 12px; white-space: nowrap; }
.nav { height: 22px; width: 29px; }
.nav:first-child { margin-left: 12px; }
.tab { height: 22px; padding: 2px 9px 0; border-radius: 4px 4px 0 0; color: #333; }
.home { padding: 2px 14px 0 41px; }
.current { height: 25px; background: #fdf5fb; border-radius: 0; margin-right: 4px; font-weight: 600; align-items: flex-start; }
.current span { line-height: 20px; border-bottom: 2px solid #217346; }
.green { background: #b5e6a2; margin-right: 7px; }
.orange { background: #be4f14; color: #fff; margin-right: 8px; }
.peach { background: #fbe2d5; color: #222; }
.add { height: 22px; margin-left: 42px; }
.more { margin: 0 1px 4px auto; }
</style>
